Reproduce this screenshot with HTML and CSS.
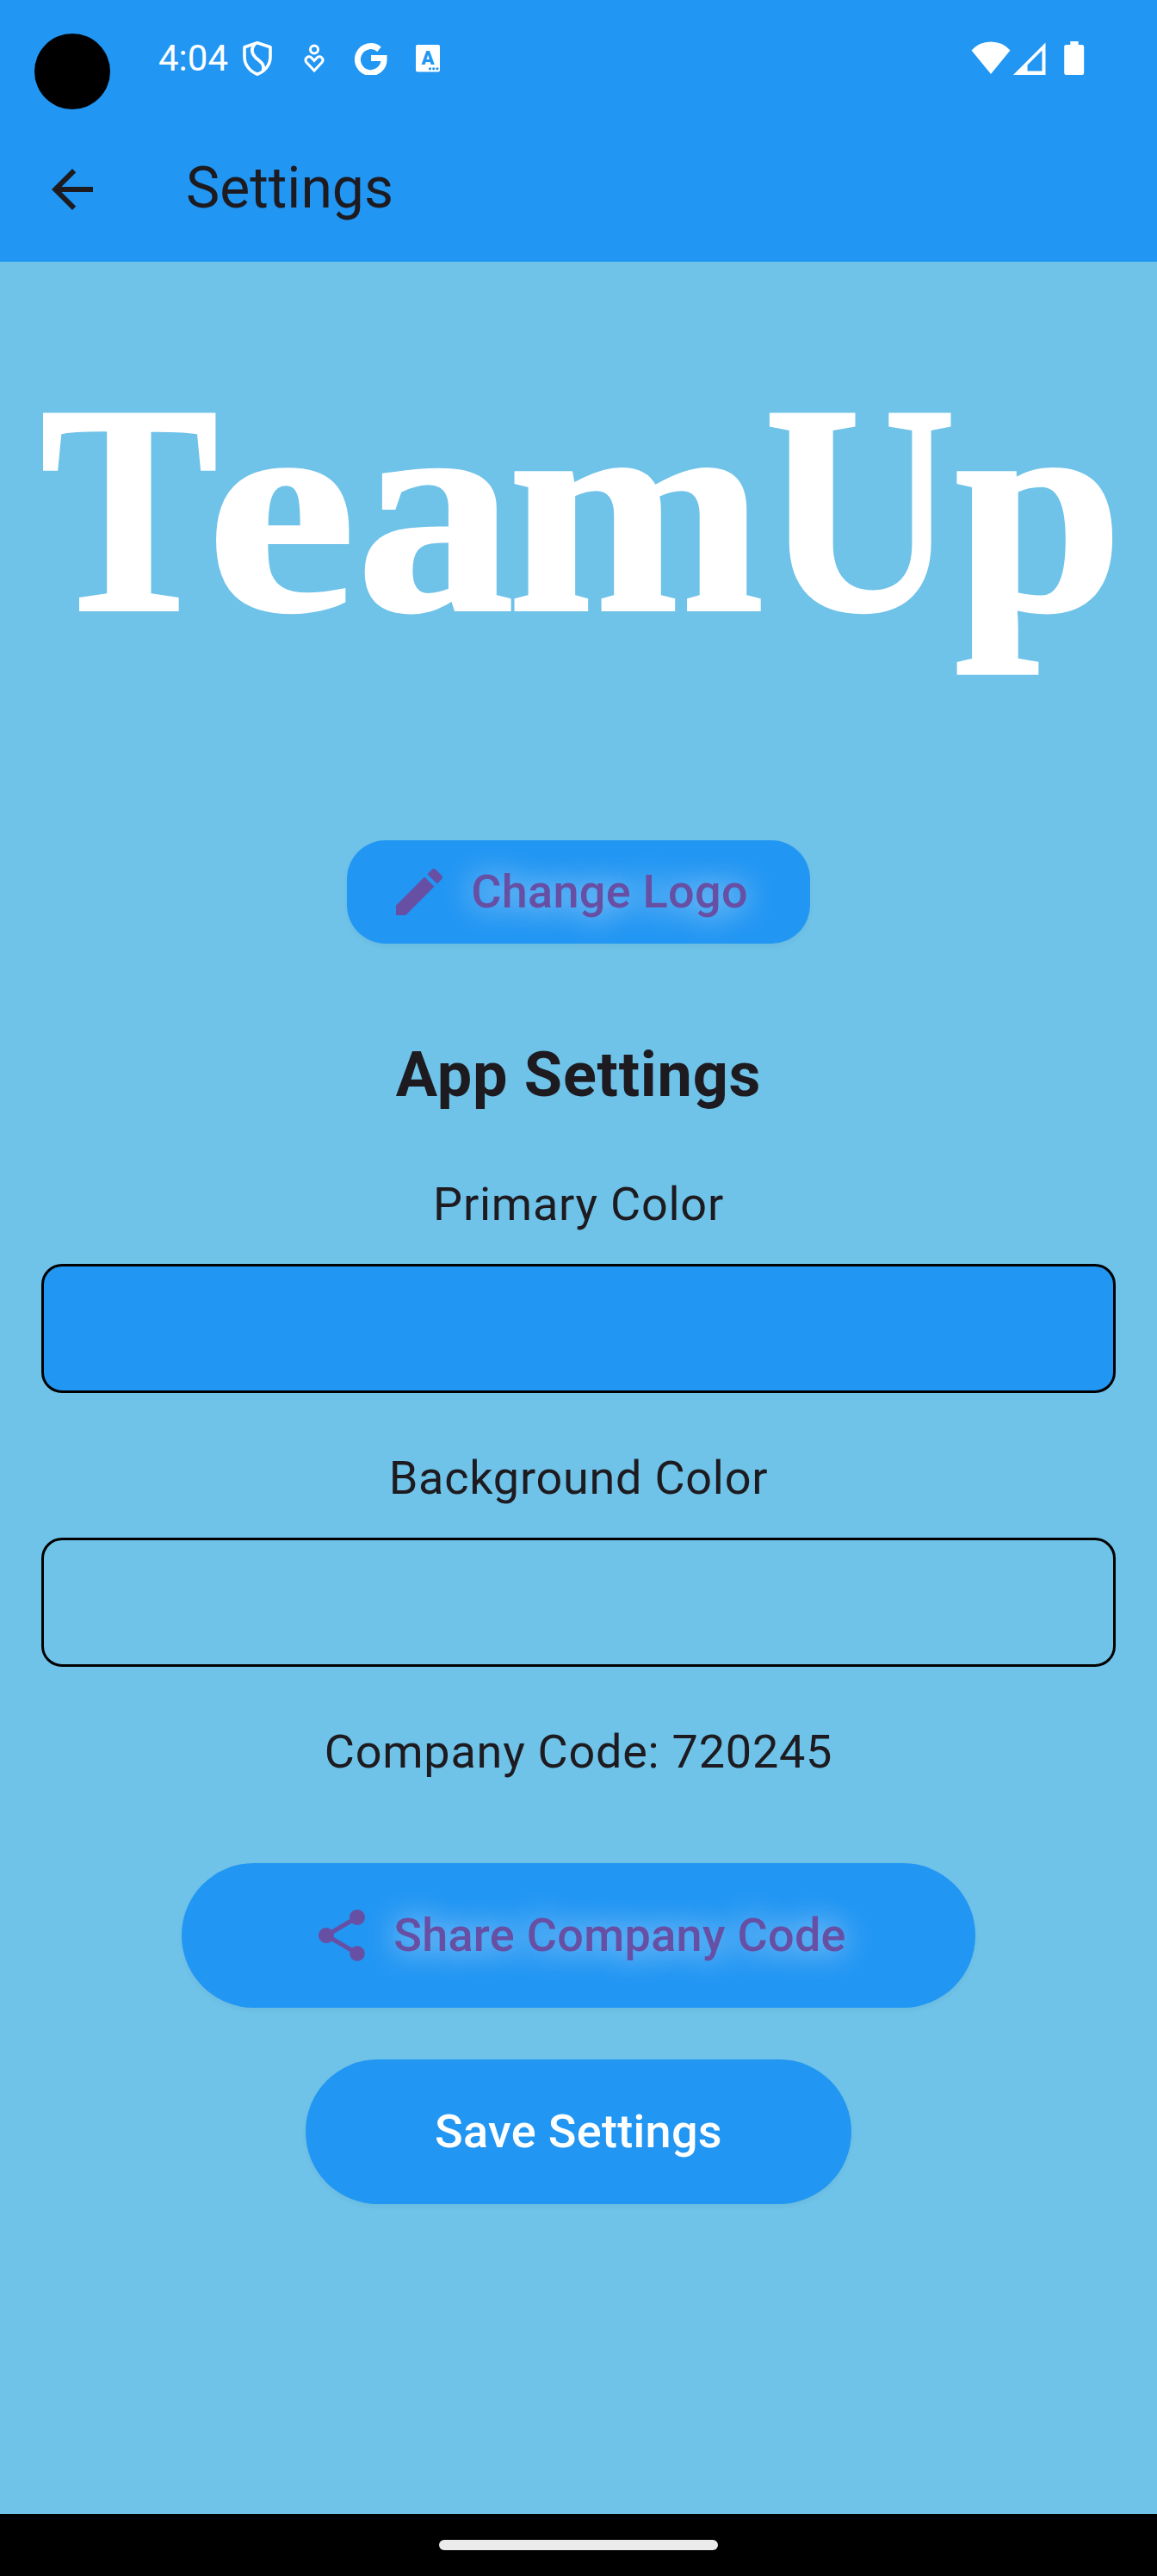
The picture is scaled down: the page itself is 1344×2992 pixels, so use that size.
FILE: index.html
```html
<!DOCTYPE html>
<html lang="en">
<head>
<meta charset="utf-8">
<title>Settings</title>
<link rel="stylesheet" href="styles.css">
</head>
<body>
<div class="screen">
  <header class="top">
    <div class="status">
      <span class="camera"></span>
      <span class="clock">4:04</span>
      <div class="notifications">
        <svg class="shield" viewBox="0 0 34 40" width="34" height="40" fill="none" stroke="#fff" stroke-width="3.6" stroke-linejoin="round"><path d="M17 1.800 2 6.800V18C2 27 8 35 17 38.200 26 35 32 27 32 18V6.800Z"/><path d="M14 3C9 9 10 14 15 19 21 24 26 27 23.500 34"/></svg>
        <svg class="care" viewBox="0 0 24 34" width="24" height="34" fill="none" stroke="#fff" stroke-width="3"><circle cx="12" cy="6.500" r="4.500"/><path d="M12 31 3.300 21.800C-.5 17 5.500 12.500 9 16.200L12 19.500 15 16.200C18.500 12.500 24.500 17 20.700 21.800Z"/></svg>
        <svg class="google" viewBox="0 0 38 38" width="38" height="38" fill="none" stroke="#fff" stroke-width="7"><path d="M28.500 8.200A15.300 15.500 0 1 0 34 19V18.500H19"/></svg>
        <svg class="translate" viewBox="0 0 28 32" width="28" height="32"><rect width="28" height="31.500" rx="2" fill="#fff"/><text x="14" y="23" text-anchor="middle">A</text><g fill="#2196f3"><circle cx="16.500" cy="27.800" r="1.600"/><circle cx="20.700" cy="27.800" r="1.600"/><circle cx="24.900" cy="27.800" r="1.600"/></g></svg>
      </div>
      <div class="system">
        <svg viewBox="0 0 46 38" width="46" height="38" fill="#fff"><path d="M23 38 .5 10.600Q9 .5 23 .5T45.500 10.600Z"/></svg>
        <svg class="signal" viewBox="0 0 38 38" width="38" height="38" fill="#fff" fill-rule="evenodd"><path d="M0 38 37.500.5V38ZM16.500 33.500H33.500V9.500L16.500 26.500Z"/></svg>
        <svg class="battery" viewBox="0 0 24 39" width="24" height="39" fill="#fff"><path d="M7.300 0H16.700V4H21Q23.200 4 23.200 6.200V36.500Q23.200 39 21 39H2.500Q.2 39 .2 36.500V6.200Q.2 4 2.500 4H7.300Z"/></svg>
      </div>
    </div>
    <div class="appbar">
      <svg viewBox="0 0 24 24" width="72" height="72" fill="#1d1b20"><path d="M20 11H7.830l5.590-5.590L12 4l-8 8 8 8 1.410-1.410L7.830 13H20v-2z"/></svg>
      <h1>Settings</h1>
    </div>
  </header>
  <main>
    <svg class="logo" viewBox="0 0 1248 672" width="1248" height="672">
      <g transform="translate(0 404)">
        <text transform="translate(-1 0) scale(.894 1)">T</text>
        <text transform="translate(192 0) scale(1.128 1)">e</text>
        <text transform="translate(366 0) scale(1.058 1)">a</text>
        <text transform="translate(542 0) scale(1.033 1)">m</text>
        <text transform="translate(840 0) scale(.89 1)">U</text>
        <text transform="translate(1061 0) scale(1.015 1)">p</text>
      </g>
    </svg>
    <button class="btn change">
      <svg viewBox="0 0 24 24" width="72" height="72"><path d="M3 17.250V21h3.750L17.810 9.940l-3.750-3.750L3 17.250zM20.710 7.040c.39-.39.39-1.020 0-1.410l-2.340-2.340c-.39-.39-1.020-.39-1.410 0l-1.830 1.830 3.750 3.750 1.830-1.830z"/></svg>
      <span>Change Logo</span>
    </button>
    <h2>App Settings</h2>
    <p>Primary Color</p>
    <div class="swatch primary"></div>
    <p>Background Color</p>
    <div class="swatch"></div>
    <p class="code">Company Code: 720245</p>
    <button class="btn share">
      <svg viewBox="0 0 24 24" width="72" height="72"><path d="M18 16.080c-.76 0-1.440.3-1.960.77L8.910 12.700c.05-.23.09-.46.09-.7s-.04-.47-.09-.7l7.050-4.110c.54.5 1.250.81 2.040.81 1.660 0 3-1.340 3-3s-1.340-3-3-3-3 1.340-3 3c0 .24.04.47.09.7L8.040 9.810C7.500 9.310 6.790 9 6 9c-1.660 0-3 1.340-3 3s1.340 3 3 3c.79 0 1.500-.31 2.040-.81l7.120 4.160c-.05.21-.08.43-.08.65 0 1.610 1.310 2.920 2.920 2.920s2.920-1.310 2.920-2.920-1.310-2.920-2.920-2.920z"/></svg>
      <span>Share Company Code</span>
    </button>
    <button class="btn save">Save Settings</button>
  </main>
  <footer><span class="handle"></span></footer>
</div>
</body>
</html>
```
FILE: styles.css
```css
* { box-sizing: border-box; }
body { margin: 0; font-family: Roboto, "Liberation Sans", sans-serif; color: #1d1b20; }
svg { display: block; flex: none; }
.screen { width: 1344px; height: 2992px; display: flex; flex-direction: column; background: #6fc2e8; }

.top { height: 304px; background: #2196f3; }
.status { height: 136px; padding: 39px 84px 0 40px; display: flex; align-items: flex-start; color: #fff; }
.camera { width: 88px; height: 88px; border-radius: 50%; background: #000; }
.clock { width: 98px; margin-left: 56px; margin-top: 4px; font-size: 42px; line-height: 50px; }
.notifications { display: flex; align-items: flex-start; }
.shield { margin-top: 9px; }
.care { margin: 12px 0 0 37px; }
.google { margin: 10px 0 0 35px; }
.translate { margin: 13px 0 0 33px; }
.translate text { font: 900 22px Roboto, sans-serif; fill: #2196f3; }
.system { display: flex; margin: 9px 0 0 auto; }
.signal { margin: 1px 0 0 3px; }
.battery { margin-left: 21px; }
.appbar { height: 168px; padding: 0 48px; display: flex; align-items: center; gap: 96px; }
.appbar h1 { margin: -2px 0 0; font-size: 66px; font-weight: 400; line-height: 84px; }

main { flex: 1; padding: 0 48px; display: flex; flex-direction: column; align-items: center; }
.logo { overflow: visible; }
.logo g { font: 700 346px "Liberation Serif", serif; fill: #fff; stroke: #fff; stroke-width: 4px; }
h2 { margin: 102px 0 60px; font-size: 72px; font-weight: 700; line-height: 102px; letter-spacing: .75px; }
p { margin: 0 0 30px; font-size: 54px; line-height: 78px; letter-spacing: .75px; }
.swatch { width: 100%; height: 150px; margin-bottom: 60px; border: 3px solid #000; border-radius: 24px; }
.primary { background: #2196f3; }
.code { margin-bottom: 90px; }

.btn { border: 0; padding: 0; flex: none; display: flex; align-items: center; justify-content: center; gap: 24px; background: #2196f3; font: 500 54px/78px Roboto, sans-serif; letter-spacing: .3px; color: #6750a4; white-space: nowrap; box-shadow: 0 3px 6px rgba(0, 0, 0, .04); }
.btn svg { fill: #6750a4; }
.btn span { text-shadow: 0 1px 36px rgba(255, 255, 255, .8); }
.change { width: 538px; height: 120px; padding: 0 72px 0 48px; border-radius: 45px; }
.share { width: 922px; height: 168px; border-radius: 84px; }
.save { width: 634px; height: 168px; margin-top: 60px; border-radius: 84px; color: #fff; }

footer { height: 72px; display: flex; align-items: center; justify-content: center; background: #000; }
.handle { width: 324px; height: 12px; border-radius: 6px; background: #ebebeb; }
```
